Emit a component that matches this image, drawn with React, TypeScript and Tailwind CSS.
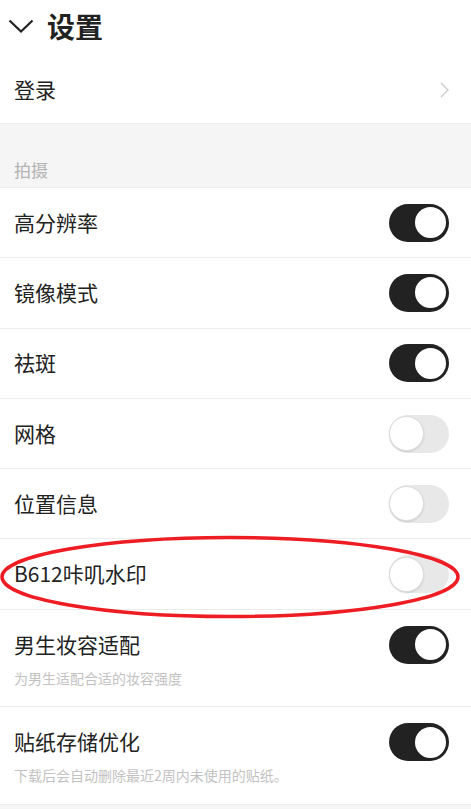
import React, { useState } from 'react';

type Item = {
  key: string;
  label: string;
  on: boolean;
  hint?: string;
};

const initialItems: Item[] = [
  { key: 'hd', label: '高分辨率', on: true },
  { key: 'mirror', label: '镜像模式', on: true },
  { key: 'spot', label: '祛斑', on: true },
  { key: 'grid', label: '网格', on: false },
  { key: 'location', label: '位置信息', on: false },
  { key: 'watermark', label: 'B612咔叽水印', on: false },
  { key: 'male', label: '男生妆容适配', on: true, hint: '为男生适配合适的妆容强度' },
  { key: 'sticker', label: '贴纸存储优化', on: true, hint: '下载后会自动删除最近2周内未使用的贴纸。' },
];

const Toggle = ({ on, onClick }: { on: boolean; onClick: () => void }) => (
  <button
    type="button"
    onClick={onClick}
    className={`relative w-[60px] h-[38px] rounded-full shrink-0 ${on ? 'bg-[#222222]' : 'bg-[#e8e8e8]'}`}
  >
    <span
      className={`absolute top-[1.5px] w-[35px] h-[35px] rounded-full bg-white ${
        on ? 'right-[1.5px] border-2 border-[#222222]' : 'left-0 border border-[#dcdcdc] shadow-[0_1px_2px_rgba(0,0,0,0.12)]'
      }`}
    />
  </button>
);

export default function App() {
  const [items, setItems] = useState(initialItems);

  const toggle = (key: string) =>
    setItems(prev => prev.map(it => (it.key === key ? { ...it, on: !it.on } : it)));

  return (
    <div
      className="relative w-[471px] h-[809px] overflow-hidden bg-[#f5f5f5] text-[#222222]"
      style={{ fontFamily: '"Noto Sans CJK SC", "Noto Sans", sans-serif' }}
    >
      <div className="bg-white">
        {/* header */}
        <div className="h-[56px] flex items-center pl-[8px] pb-[5px]">
          <svg width="26" height="14" viewBox="0 0 26 14" fill="none" className="mt-[1px]">
            <path d="M1.5 1.5 L13 12.5 L24.5 1.5" stroke="#222" strokeWidth="2.2" strokeLinejoin="miter" />
          </svg>
          <span className="ml-[13px] text-[28px] font-bold leading-none">设置</span>
        </div>

        <div className="h-[68px] flex items-center justify-between pl-[14px] pr-[22px] border-b border-[#ececec]">
          <span className="text-[21px]">登录</span>
          <svg width="9" height="16" viewBox="0 0 9 16" fill="none">
            <path d="M1 1 L8 8 L1 15" stroke="#c9c9c9" strokeWidth="1.3" />
          </svg>
        </div>
      </div>

      <div className="h-[64px] flex items-end pl-[14px] pb-[5px] border-b border-[#ececec] bg-[#f5f5f5]">
        <span className="text-[17px] text-[#b3b3b3]">拍摄</span>
      </div>

      <div className="bg-white">
        {items.map(it =>
          it.hint ? (
            <div
              key={it.key}
              className="h-[97.5px] flex items-start justify-between pl-[14px] pr-[22px] pt-[16px] border-b border-[#ececec]"
            >
              <div className="flex flex-col">
                <span className="text-[21px] leading-[36px]">{it.label}</span>
                <span className="mt-[6px] text-[14px] leading-[20px] text-[#c2c2c2]">{it.hint}</span>
              </div>
              <div className="pt-[0px]">
                <Toggle on={it.on} onClick={() => toggle(it.key)} />
              </div>
            </div>
          ) : (
            <div
              key={it.key}
              className="h-[70.3px] flex items-center justify-between pl-[14px] pr-[22px] border-b border-[#ececec]"
            >
              <span className="text-[21px]">{it.label}</span>
              <Toggle on={it.on} onClick={() => toggle(it.key)} />
            </div>
          )
        )}
      </div>

      {/* annotation ring */}
      <svg className="absolute left-0 top-0 pointer-events-none" width="471" height="809">
        <ellipse cx="230" cy="577" rx="228" ry="39.5" fill="none" stroke="#ee1c23" strokeWidth="3.5" />
      </svg>
    </div>
  );
}
